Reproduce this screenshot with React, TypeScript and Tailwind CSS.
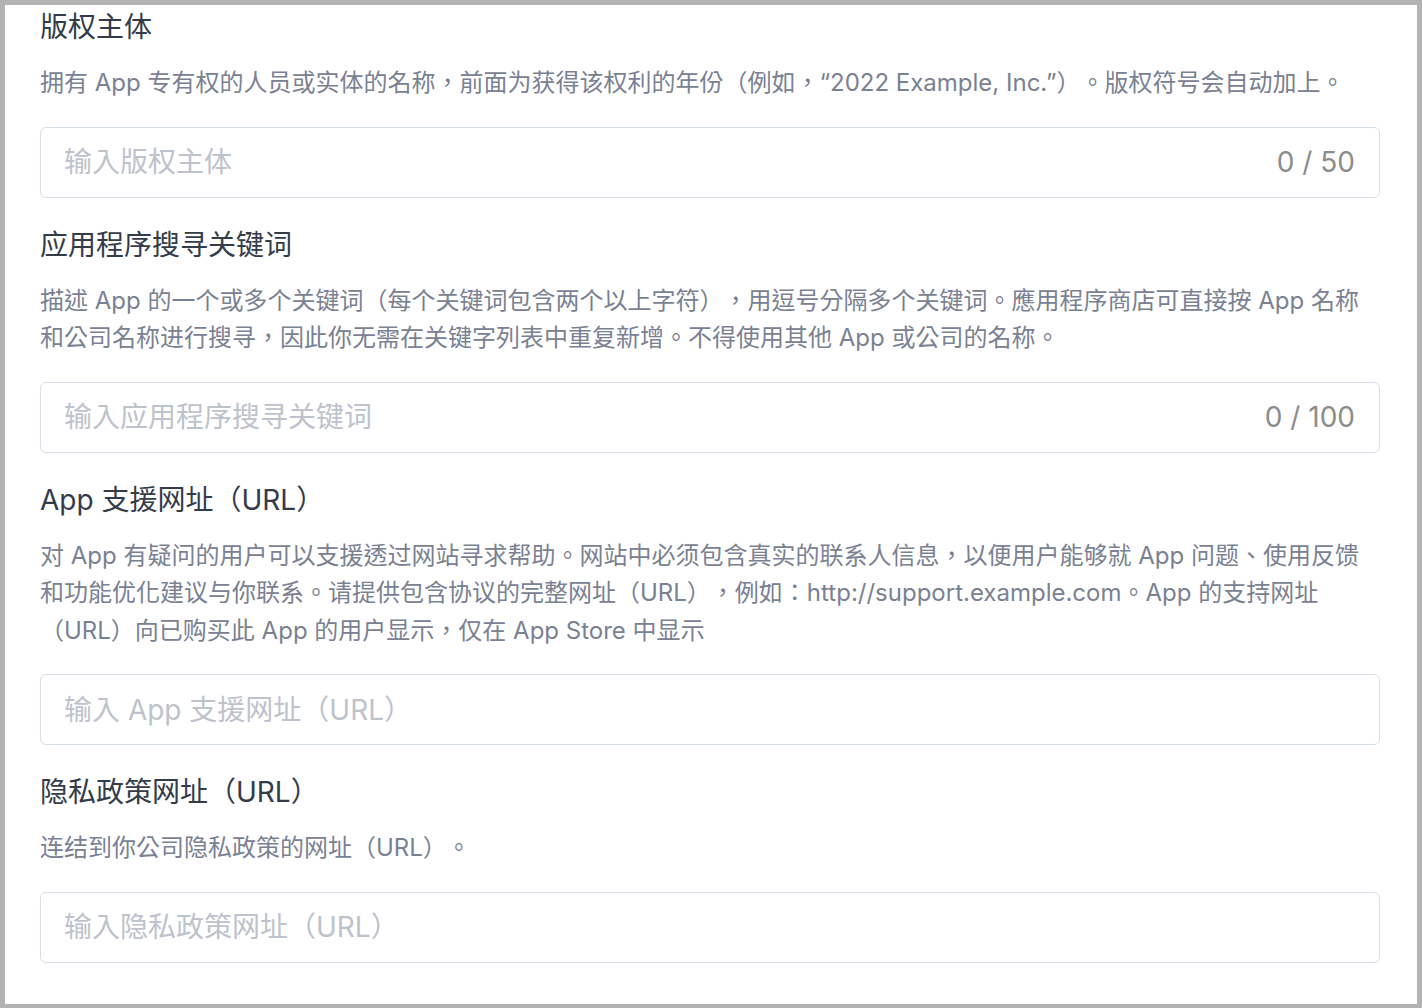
import React from "react";

interface FieldProps {
  title: string;
  desc: string;
  placeholder: string;
  max?: number;
}

function Field({ title, desc, placeholder, max }: FieldProps) {
  return (
    <div className="flex flex-col">
      <h2 className="text-[28px] leading-[36px] font-normal text-[#343b49]">{title}</h2>
      <p className="mt-[19px] text-[24px] leading-[37.5px] text-[#7a8193]">{desc}</p>
      <div className="mt-[25px] h-[71px] rounded-[6px] border border-[#d6dee8] bg-white flex items-center pl-[23px] pr-[24px]">
        <input
          className="flex-1 min-w-0 bg-transparent outline-none text-[28px] text-[#343b49] placeholder:text-[#bdc2cc]"
          placeholder={placeholder}
        />
        {max !== undefined && (
          <span className="ml-4 text-[28px] text-[#8c8c8c]">0 / {max}</span>
        )}
      </div>
    </div>
  );
}

export default function App() {
  const fields: FieldProps[] = [
    {
      title: "版权主体",
      desc: "拥有 App 专有权的人员或实体的名称，前面为获得该权利的年份（例如，“2022 Example, Inc.”）。版权符号会自动加上。",
      placeholder: "输入版权主体",
      max: 50,
    },
    {
      title: "应用程序搜寻关键词",
      desc: "描述 App 的一个或多个关键词（每个关键词包含两个以上字符），用逗号分隔多个关键词。應用程序商店可直接按 App 名称和公司名称进行搜寻，因此你无需在关键字列表中重复新增。不得使用其他 App 或公司的名称。",
      placeholder: "输入应用程序搜寻关键词",
      max: 100,
    },
    {
      title: "App 支援网址（URL）",
      desc: "对 App 有疑问的用户可以支援透过网站寻求帮助。网站中必须包含真实的联系人信息，以便用户能够就 App 问题、使用反馈和功能优化建议与你联系。请提供包含协议的完整网址（URL），例如：http://support.example.com。App 的支持网址（URL）向已购买此 App 的用户显示，仅在 App Store 中显示",
      placeholder: "输入 App 支援网址（URL）",
    },
    {
      title: "隐私政策网址（URL）",
      desc: "连结到你公司隐私政策的网址（URL）。",
      placeholder: "输入隐私政策网址（URL）",
    },
  ];

  return (
    <div className="h-[1008px] bg-[#b3b3b3] pt-[5px] pb-[4px] px-[5px] font-['Inter','Noto_Sans_CJK_TC',sans-serif] [text-spacing-trim:space-all]">
      <div className="h-full overflow-hidden bg-white pl-[35px] pr-[37px] pt-[4px]">
        <div className="flex flex-col gap-[29px]">
          {fields.map((f) => (
            <Field key={f.title} {...f} />
          ))}
        </div>
      </div>
    </div>
  );
}
